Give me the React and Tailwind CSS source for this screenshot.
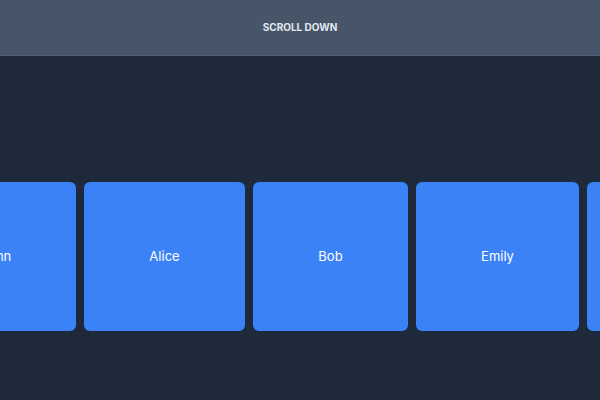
const cards = [
  { name: 'John', w: 'w-[160px]' },
  { name: 'Alice', w: 'w-[161px]' },
  { name: 'Bob', w: 'w-[155px]' },
  { name: 'Emily', w: 'w-[163px]' },
  { name: 'Mike', w: 'w-[160px]' },
]

export default function App() {
  return (
    <div className="h-[400px] w-[600px] overflow-hidden bg-[#1e293b] font-['Inter',sans-serif]">
      <header className="flex h-[56px] items-center justify-center border-b border-[#52607a] bg-[#475569]">
        <span className="text-[10px] font-bold uppercase text-slate-200">Scroll down</span>
      </header>
      <div className="mt-[126px] flex gap-2 -ml-[84px]">
        {cards.map((c) => (
          <div
            key={c.name}
            className={`${c.w} flex h-[149px] shrink-0 items-center justify-center rounded-md bg-[#3b82f6] text-[13px] text-white`}
          >
            {c.name}
          </div>
        ))}
      </div>
    </div>
  )
}
